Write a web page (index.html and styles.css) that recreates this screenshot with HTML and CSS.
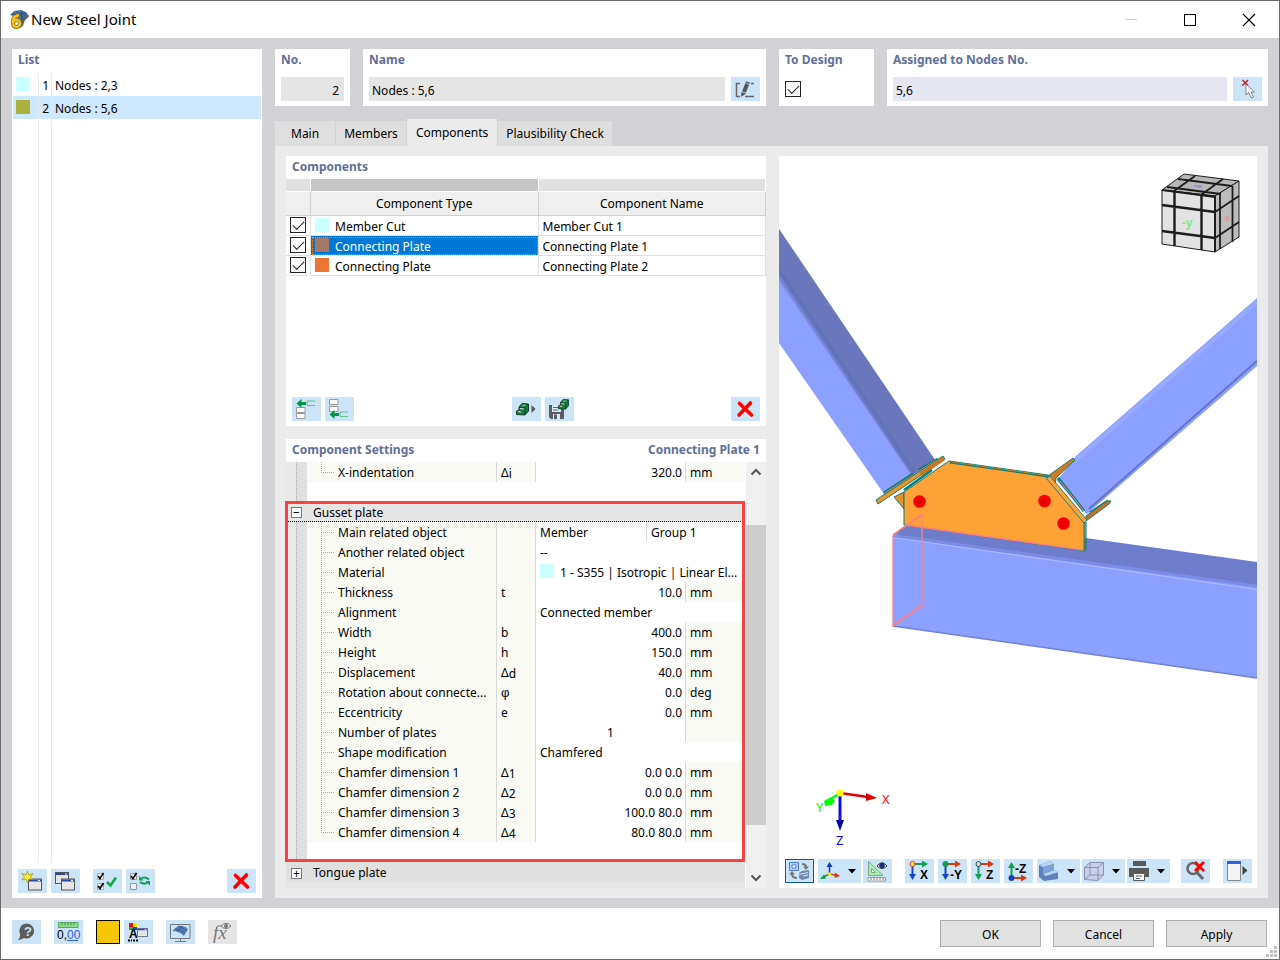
FILE: index.html
```html
<!DOCTYPE html>
<html lang="en">
<head>
    <meta charset="UTF-8">
    <meta name="viewport" content="width=device-width, initial-scale=1.0">
    <title>New Steel Joint</title>
    <link rel="stylesheet" href="styles.css">
</head>
<body>
    <!-- Shared icons -->
    <svg class="defs" width="0" height="0" aria-hidden="true">
        <symbol id="icon-delete" viewBox="0 0 29 24">
            <path d="M8.500 6.500L20.500 18M19.500 6L8 18" fill="none" stroke="#f00" stroke-width="3.600" stroke-linecap="round"/>
        </symbol>
        <symbol id="icon-window" viewBox="0 0 14 12">
            <rect x="0.500" y="0.500" width="13" height="11" fill="#e6e6e6" stroke="#555"/>
            <path d="M1 2h12" stroke="#2b46b0" stroke-width="2"/>
            <path d="M10 2h2" stroke="#fff"/>
        </symbol>
        <symbol id="icon-block" viewBox="0 0 13 13">
            <path d="M3 4L6 0.500L12.500 1V8L9 12L0.500 11.500V8L3 7Z" fill="#1c7a3f" stroke="#163b25"/>
            <path d="M3 4L9 4.500L12 1M9 4.500V11" fill="none" stroke="#163b25"/>
            <path d="M6.500 1.500L11 2L9 3.700L5 3.300Z" fill="#3cc274"/>
            <path d="M2 8.500L5 9M4 5.500L8 6" stroke="#d5eedd"/>
        </symbol>
    </svg>

    <div class="window">
        <header class="titlebar">
            <svg class="app-icon" viewBox="0 0 21 21" width="21" height="21">
                <path d="M1 6L5 2L12 1L17 3L20 7L16 11L14 17L11 19L8 7Z" fill="#4a74ac"/>
                <path d="M2 6L17 4M7 2L16 10M13 2L12 16" stroke="#2d4c78"/>
                <path d="M16 5L20 7L15 12L12 18L12 11Z" fill="#5a5b60"/>
                <path d="M10 6Q4 7 3.500 13" fill="none" stroke="#8a6d18" stroke-width="4"/>
                <circle cx="7.500" cy="14.500" r="3.500" fill="none" stroke="#8a6d18" stroke-width="4"/>
                <path d="M10 6Q4 7 3.500 13" fill="none" stroke="#f2c41c" stroke-width="2.500"/>
                <circle cx="7.500" cy="14.500" r="3.500" fill="none" stroke="#f2c41c" stroke-width="2.500"/>
            </svg>
            <h1>New Steel Joint</h1>
            <div class="window-controls">
                <button aria-label="Minimize" disabled><svg viewBox="0 0 14 14" width="14" height="14"><path d="M1 6.500h12" stroke="#ccc"/></svg></button>
                <button aria-label="Maximize"><svg viewBox="0 0 14 14" width="14" height="14"><rect x="1.500" y="1.500" width="11" height="11" fill="none" stroke="#000"/></svg></button>
                <button aria-label="Close"><svg viewBox="0 0 14 14" width="14" height="14"><path d="M1 1L13 13M13 1L1 13" stroke="#000" stroke-width="1.200"/></svg></button>
            </div>
        </header>

        <main class="workspace">
            <!-- Joint list -->
            <section class="panel list-panel">
                <h2>List</h2>
                <ul class="joint-list">
                    <li><span class="swatch cyan"></span><span class="joint-no">1</span><span class="joint-name">Nodes : 2,3</span></li>
                    <li class="selected"><span class="swatch olive"></span><span class="joint-no">2</span><span class="joint-name">Nodes : 5,6</span></li>
                    <li class="filler"><span></span><span class="joint-no"></span><span class="joint-name"></span></li>
                </ul>
                <div class="toolbar list-toolbar">
                    <button class="tool" aria-label="New">
                        <svg viewBox="0 0 29 24"><use href="#icon-window" x="10" y="9" width="14" height="13"/><path d="M9.500 2L11 6L15 4.500L12.500 8L15 10.500L11 10L9.500 13.500L8 10L4 11L6.500 8L4 4.500L8 6Z" fill="#ffee2e" stroke="#9a8d12" stroke-width="0.700"/></svg>
                    </button>
                    <button class="tool" aria-label="Copy">
                        <svg viewBox="0 0 29 24"><use href="#icon-window" x="4" y="3" width="14" height="12"/><use href="#icon-window" x="10" y="9" width="14" height="13"/></svg>
                    </button>
                    <button class="tool space-left" aria-label="Check all">
                        <svg viewBox="0 0 29 24"><path d="M4.500 4.500h6v6h-6zM4.500 14.500h6v6h-6z" fill="#fff" stroke="#aaa"/><path d="M5 7L7 9.500L10.500 4M5 17L7 19.500L10.500 14" fill="none" stroke="#000" stroke-width="1.700"/><path d="M14 13L17.500 16.500L23 8.500" fill="none" stroke="#12a84a" stroke-width="2.600"/></svg>
                    </button>
                    <button class="tool" aria-label="Invert checks">
                        <svg viewBox="0 0 29 24"><path d="M4.500 4.500h6v6h-6zM4.500 14.500h6v6h-6z" fill="#e8f1f8" stroke="#999"/><path d="M5 7L7 9.500L10.500 4" fill="none" stroke="#000" stroke-width="1.700"/><path d="M15 9.500Q19 7 23 10.500M22 13.500Q18 16 14 13" fill="none" stroke="#12a05a" stroke-width="2"/><path d="M13 7V11.500H17.500ZM24 16.500V12H19.500Z" fill="#12a05a"/></svg>
                    </button>
                    <button class="tool push-right" aria-label="Delete"><svg viewBox="0 0 29 24"><use href="#icon-delete"/></svg></button>
                </div>
            </section>

            <div class="details">
                <!-- General data -->
                <div class="general">
                    <section class="panel field-panel">
                        <h2><label for="jointNo">No.</label></h2>
                        <div class="field-row"><input type="text" id="jointNo" class="align-right" value="2" readonly></div>
                    </section>
                    <section class="panel field-panel">
                        <h2><label for="jointName">Name</label></h2>
                        <div class="field-row">
                            <input type="text" id="jointName" value="Nodes : 5,6" readonly>
                            <button class="tool" aria-label="Edit name">
                                <svg viewBox="0 0 29 24"><path d="M9 6.500H5.500V19.500H9M20 6.500h3M14 19.500h9" fill="none" stroke="#666" stroke-width="1.500"/><path d="M17 5L13 15" stroke="#555" stroke-width="4"/><path d="M10.500 15L15 16.500L10 20Z" fill="#555"/><path d="M15 6L19 8" stroke="#cce4f7" stroke-width="0.800"/></svg>
                            </button>
                        </div>
                    </section>
                    <section class="panel field-panel">
                        <h2><label for="toDesign">To Design</label></h2>
                        <div class="field-row"><input type="checkbox" id="toDesign" checked></div>
                    </section>
                    <section class="panel field-panel">
                        <h2><label for="nodes">Assigned to Nodes No.</label></h2>
                        <div class="field-row">
                            <input type="text" id="nodes" class="editable" value="5,6">
                            <button class="tool" aria-label="Select nodes">
                                <svg viewBox="0 0 29 24"><path d="M9.500 3L15 8.500M15 3L9.500 8.500" stroke="#e01020" stroke-width="1.500"/><path d="M13 7V18L15.500 15.500L18.500 21L20.500 20L18 15H21.500Z" fill="#fff" stroke="#666" stroke-width="0.800"/></svg>
                            </button>
                        </div>
                    </section>
                </div>

                <nav class="tabs">
                    <button class="tab tab-main">Main</button>
                    <button class="tab">Members</button>
                    <button class="tab active">Components</button>
                    <button class="tab">Plausibility Check</button>
                </nav>

                <div class="tab-page">
                    <div class="editor">
                        <section class="panel components-panel">
                            <h2>Components</h2>
                            <table class="components">
                                <colgroup><col class="col-check"><col><col></colgroup>
                                <thead>
                                    <tr class="strip"><td></td><td class="current"></td><td></td></tr>
                                    <tr><th></th><th>Component Type</th><th>Component Name</th></tr>
                                </thead>
                                <tbody>
                                    <tr><td><input type="checkbox" aria-label="Member Cut 1" checked></td><td><div class="type"><span class="swatch cyan"></span>Member Cut</div></td><td>Member Cut 1</td></tr>
                                    <tr><td><input type="checkbox" aria-label="Connecting Plate 1" checked></td><td class="selected"><div class="type"><span class="swatch brown"></span>Connecting Plate</div></td><td>Connecting Plate 1</td></tr>
                                    <tr><td><input type="checkbox" aria-label="Connecting Plate 2" checked></td><td><div class="type"><span class="swatch orange"></span>Connecting Plate</div></td><td>Connecting Plate 2</td></tr>
                                </tbody>
                            </table>
                            <div class="toolbar components-toolbar">
                                <button class="tool" aria-label="Insert above">
                                    <svg viewBox="0 0 29 24"><path d="M4.500 10.500h8.500v5h-8.500zM4.500 16.500h8.500v5h-8.500z" fill="#fff" stroke="#999"/><path d="M4.500 6.500L9.500 2V5H14V8H9.500V11Z" fill="#00964a"/><path d="M23 4H15V8.500H23" fill="none" stroke="#5fbf93"/></svg>
                                </button>
                                <button class="tool" aria-label="Insert below">
                                    <svg viewBox="0 0 29 24"><path d="M4.500 2.500h8.500v5h-8.500zM4.500 9.500h8.500v5h-8.500z" fill="#fff" stroke="#999"/><path d="M4.500 17.500L9.500 13V16H14V19H9.500V22Z" fill="#00964a"/><path d="M23 15H15V19.500H23" fill="none" stroke="#5fbf93"/></svg>
                                </button>
                                <span class="library-tools">
                                    <button class="tool" aria-label="Component library">
                                        <svg viewBox="0 0 29 24"><use href="#icon-block" x="4" y="6" width="13" height="13"/><path d="M19.500 8V16L23.500 12Z" fill="#555"/></svg>
                                    </button>
                                    <button class="tool" aria-label="Save component">
                                        <svg viewBox="0 0 29 24"><path d="M4 8H19V22H6L4 20Z" fill="#5b5b60"/><path d="M7 8h9v7H7z" fill="#d7e8f5"/><path d="M8 10.500h7M8 13h5" stroke="#666"/><path d="M8 17h7v5H8z" fill="#d7e8f5"/><path d="M9 17.500h3v4.500H9z" fill="#5b5b60"/><use href="#icon-block" x="13" y="2" width="11" height="11"/></svg>
                                    </button>
                                </span>
                                <button class="tool push-right" aria-label="Delete component"><svg viewBox="0 0 29 24"><use href="#icon-delete"/></svg></button>
                            </div>
                        </section>

                        <section class="panel settings-panel">
                            <h2>Component Settings<span>Connecting Plate 1</span></h2>
                            <div class="settings-body">
                                <div class="tree">
                                    <table class="props">
                                        <colgroup><col class="c-gutter"><col class="c-label"><col class="c-symbol"><col class="c-value"><col class="c-extra"><col class="c-unit"></colgroup>
                                        <tbody>
                                            <tr class="last"><td></td><td>X-indentation</td><td>Δ<sub>i</sub></td><td class="number" colspan="2">320.0</td><td>mm</td></tr>
                                            <tr class="blank"><td></td><td colspan="5"></td></tr>
                                        </tbody>
                                    </table>
                                    <div class="group highlighted">
                                        <div class="group-title current"><button class="expander" aria-label="Collapse">−</button>Gusset plate</div>
                                        <table class="props">
                                            <colgroup><col class="c-gutter"><col class="c-label"><col class="c-symbol"><col class="c-value"><col class="c-extra"><col class="c-unit"></colgroup>
                                            <tbody>
                                                <tr><td></td><td>Main related object</td><td></td><td>Member</td><td class="choice" colspan="2">Group 1</td></tr>
                                                <tr><td></td><td>Another related object</td><td></td><td colspan="3">--</td></tr>
                                                <tr><td></td><td>Material</td><td></td><td colspan="3"><div class="material"><span class="swatch cyan"></span>1 - S355 | Isotropic | Linear El...</div></td></tr>
                                                <tr><td></td><td>Thickness</td><td>t</td><td class="number" colspan="2">10.0</td><td>mm</td></tr>
                                                <tr><td></td><td>Alignment</td><td></td><td colspan="3">Connected member</td></tr>
                                                <tr><td></td><td>Width</td><td>b</td><td class="number" colspan="2">400.0</td><td>mm</td></tr>
                                                <tr><td></td><td>Height</td><td>h</td><td class="number" colspan="2">150.0</td><td>mm</td></tr>
                                                <tr><td></td><td>Displacement</td><td>Δ<sub>d</sub></td><td class="number" colspan="2">40.0</td><td>mm</td></tr>
                                                <tr><td></td><td>Rotation about connecte...</td><td class="angle">φ</td><td class="number" colspan="2">0.0</td><td>deg</td></tr>
                                                <tr><td></td><td>Eccentricity</td><td>e</td><td class="number" colspan="2">0.0</td><td>mm</td></tr>
                                                <tr><td></td><td>Number of plates</td><td></td><td class="count" colspan="2">1</td><td class="unit"></td></tr>
                                                <tr><td></td><td>Shape modification</td><td></td><td colspan="3">Chamfered</td></tr>
                                                <tr><td></td><td>Chamfer dimension 1</td><td>Δ<sub>1</sub></td><td class="number" colspan="2">0.0 0.0</td><td>mm</td></tr>
                                                <tr><td></td><td>Chamfer dimension 2</td><td>Δ<sub>2</sub></td><td class="number" colspan="2">0.0 0.0</td><td>mm</td></tr>
                                                <tr><td></td><td>Chamfer dimension 3</td><td>Δ<sub>3</sub></td><td class="number" colspan="2">100.0 80.0</td><td>mm</td></tr>
                                                <tr class="last"><td></td><td>Chamfer dimension 4</td><td>Δ<sub>4</sub></td><td class="number" colspan="2">80.0 80.0</td><td>mm</td></tr>
                                                <tr class="blank"><td></td><td colspan="5"></td></tr>
                                            </tbody>
                                        </table>
                                    </div>
                                    <div class="group-title"><button class="expander" aria-label="Expand">+</button>Tongue plate</div>
                                    <div class="group-title cut"></div>
                                </div>
                                <div class="scrollbar">
                                    <button aria-label="Scroll up"><svg viewBox="0 0 12 8" width="12" height="8"><path d="M1.500 6.500L6 2L10.500 6.500" fill="none" stroke="#555" stroke-width="2"/></svg></button>
                                    <div class="track"><div class="thumb"></div></div>
                                    <button aria-label="Scroll down"><svg viewBox="0 0 12 8" width="12" height="8"><path d="M1.500 1.500L6 6L10.500 1.500" fill="none" stroke="#555" stroke-width="2"/></svg></button>
                                </div>
                            </div>
                        </section>
                    </div>

                    <!-- 3D view -->
                    <section class="panel view-panel">
                        <svg class="scene" viewBox="779 156 478 698" preserveAspectRatio="xMidYMid meet" role="img" aria-label="Joint model">
                            <defs>
                                <linearGradient id="shadeLeft" gradientUnits="userSpaceOnUse" x1="849" y1="370" x2="840" y2="376">
                                    <stop offset="0" stop-color="#6a77bd"/><stop offset="0.300" stop-color="#6070b4"/><stop offset="1" stop-color="#8ca0ff"/>
                                </linearGradient>
                            </defs>
                            <!-- left diagonal -->
                            <path d="M779 229L935 460L884 494L779 343Z" fill="#8ca0ff"/>
                            <path d="M779 266L919 471L912 476L779 281Z" fill="url(#shadeLeft)"/>
                            <path d="M779 229L937 463L919 472L779 268Z" fill="#6a77bd"/>
                            <!-- right diagonal -->
                            <path d="M1257 298L1076 456L1057 481L1087 514L1257 366Z" fill="#8ca0ff"/>
                            <path d="M1257 302L1075 461" stroke="#96aaff" stroke-width="4"/>
                            <path d="M1257 361L1089 509" stroke="#6474c4" stroke-width="2"/>
                            <!-- chord -->
                            <path d="M893 534L922 515L1257 562V588L893 538Z" fill="#6d7dcb"/>
                            <path d="M893 537L1257 587V678L893 626Z" fill="#8ca0ff"/>
                            <path d="M893 535.500L1257 586" stroke="#7a8ce6" stroke-width="3"/>
                            <path d="M893 537.500L1257 589.500" stroke="#aabfff"/>
                            <path d="M893 626L1257 678" stroke="#6f80d2" stroke-width="1.500"/>
                            <!-- end plates -->
                            <path d="M894 497L904 492V509Z" fill="#e98e26" stroke="#0a7f78"/>
                            <path d="M884 493L913 474M919 470L938 459M1058 478L1084 511M1090 513L1108 501" stroke="#0a7f78" stroke-width="3"/>
                            <path d="M885 493L913 475M919 471L936 460M1060 481L1084 511M1090 513L1107 502" stroke="#ff8080"/>
                            <path d="M876 500L943 456L945 459L878 504Z" fill="#f09428" stroke="#0a7f78"/>
                            <path d="M919 473L943 457L945 460L922 476Z" fill="#ca7424"/>
                            <path d="M904 490L932 470" stroke="#0a7f78" stroke-width="2.500"/>
                            <path d="M1048 476L1073 458L1075 460L1056 478L1055 484Z" fill="#d27a22" stroke="#0a7f78"/>
                            <path d="M1086 521L1109 504L1111 501L1107 501L1086 516Z" fill="#c97021" stroke="#0a7f78"/>
                            <!-- gusset plate -->
                            <path d="M904 492L949 461L1048 475L1085 521V551L904 525Z" fill="#ffa235" stroke="#0a7f78"/>
                            <path d="M950 462.500L1048 476.500" stroke="#0a7f78" stroke-width="1.800"/>
                            <path d="M951 462L1047 475.500" stroke="#c78229" stroke-width="0.800"/>
                            <path d="M1046 478L1050 476L1087 520L1084 523Z" fill="#ffa235" stroke="#0a7f78" stroke-width="0.900"/>
                            <path d="M1084 522V550M1086 522V549" stroke="#0a7f78"/>
                            <path d="M905 525L1083 550" stroke="#ff8080" stroke-width="1.600"/>
                            <path d="M893 626V536L900 530L922 515V606Z" fill="none" stroke="#ff8080" stroke-width="1.300"/>
                            <path d="M894 624L921 605M894 534L921 514" stroke="#ff8080"/>
                            <g fill="#f60000"><circle cx="919.500" cy="501.500" r="6.300"/><circle cx="1044.500" cy="501" r="6.300"/><circle cx="1063.500" cy="523.500" r="6.300"/></g>
                            <g fill="none" stroke="#c80000"><circle cx="919" cy="502" r="2"/><circle cx="1044" cy="502" r="2"/><circle cx="1063" cy="524" r="2"/></g>
                            <!-- navigation cube -->
                            <g stroke="#1c1c1c" stroke-linejoin="round">
                                <path d="M1162 190L1184 174L1239 181L1215 196Z" fill="#b8b8b8"/>
                                <path d="M1215 196L1239 181V237L1215 252Z" fill="#bcbcbc"/>
                                <path d="M1162 190L1215 196V252L1162 244Z" fill="#e2e2e2"/>
                                <path d="M1174.500 192V246M1201.500 195V250M1162 205L1215 212M1162 231L1215 238" stroke-width="2.400"/>
                                <path d="M1220 193V249M1232.500 186V242M1215 212L1239 196M1215 238L1239 222" stroke-width="1.800"/>
                                <path d="M1167 187L1221 194M1178 179L1232 186M1174 191L1195 176M1201 195L1223 179M1162 190L1215 197" stroke-width="1.800"/>
                                <path d="M1215 196V252" stroke-width="2"/>
                            </g>
                            <g class="cube-label">
                                <text x="1182" y="227" fill="#82e887">-y</text>
                                <text x="1223" y="221" fill="#d99a9a" class="small">-x</text>
                                <path d="M1194 186h8M1197 187h5" stroke="#8d90c9" stroke-width="1.500"/>
                            </g>
                            <!-- axes -->
                            <path d="M840 793L868 797" stroke="#e00000" stroke-width="2.500"/>
                            <path d="M866 793L877 798L866 801Z" fill="#e00000"/>
                            <path d="M840 793L831 799" stroke="#0f0" stroke-width="2.500"/>
                            <path d="M831 797L824 801L825 806L832 805L835 801Z" fill="#0f0"/>
                            <path d="M840 794V822" stroke="#1010d8" stroke-width="3"/>
                            <path d="M836 820H844L840 831Z" fill="#0808a8"/>
                            <circle cx="840" cy="793" r="3.500" fill="#ff0"/>
                            <g class="axis-label">
                                <text x="882" y="804" fill="#f00">X</text>
                                <text x="816" y="812" fill="#0f0">Y</text>
                                <text x="836" y="845" fill="#00f">Z</text>
                            </g>
                        </svg>

                        <div class="toolbar view-toolbar">
                            <button class="tool pressed" aria-label="Switch view">
                                <svg viewBox="0 0 29 24"><path d="M4.500 3.500h9v8h-9z" fill="#b9d0fa" stroke="#4c78d8"/><path d="M7 6h4v3H7z" fill="#fff" stroke="#4c78d8"/><path d="M14 14L17 12L24 11V19L17 21L14 19Z" fill="#6f88ae"/><path d="M14 15.500L23 13.500M18 17L23 16" stroke="#dbe7f5"/><path d="M17 5Q21 5 21 8M12 19Q7 19 7 15" fill="none" stroke="#777" stroke-width="2"/><path d="M18 7.500H24L21 11ZM4 15.500H10L7 12Z" fill="#777"/></svg>
                            </button>
                            <button class="tool drop" aria-label="Axes">
                                <svg viewBox="0 0 43 24"><path d="M11.500 15V6" stroke="#1238c8" stroke-width="1.500"/><path d="M8.500 8L11.500 3L14.500 8Z" fill="#1238c8"/><path d="M11.500 15L5 18" stroke="#0a9a45" stroke-width="1.500"/><path d="M2 20L8 19.500L6 15.500Z" fill="#0a9a45"/><path d="M11.500 15L19 16.500" stroke="#d83a10" stroke-width="1.500"/><path d="M22 17L17 13.500L16.500 19Z" fill="#d83a10"/><circle cx="11.500" cy="15" r="1.800" fill="#ffe000"/><path d="M30 10H38L34 14.500Z" fill="#000"/></svg>
                            </button>
                            <button class="tool" aria-label="Measure">
                                <svg viewBox="0 0 29 24"><path d="M5.500 2.500V16.500H20Z" fill="#a9efb0" stroke="#7fa98a"/><path d="M8.500 9.500V13.500H12.500Z" fill="#fff" stroke="#7fa98a"/><path d="M5 18.500H22.500V22H5Z" fill="#fff" stroke="#999"/><path d="M8 19V21M11 19V21M14 19V21M17 19V21M20 19V21" stroke="#777"/><path d="M14 7Q19 0.500 24 7Q19 12 14 7Z" fill="#fff" stroke="#334"/><circle cx="19" cy="6.500" r="2.800" fill="#1d2f7a"/></svg>
                            </button>
                            <button class="tool space-left" aria-label="View in X">
                                <svg viewBox="0 0 29 24"><path d="M7.500 5V17" stroke="#1543c8" stroke-width="2"/><path d="M4 15H11L7.500 21Z" fill="#1543c8"/><path d="M8 5H18" stroke="#12a050" stroke-width="2"/><path d="M17 1.500V8.500L23 5Z" fill="#12a050"/><circle cx="7.500" cy="5" r="2.500" fill="#ffe94a" stroke="#e0401c"/><text x="15" y="20">X</text></svg>
                            </button>
                            <button class="tool" aria-label="View in -Y">
                                <svg viewBox="0 0 29 24"><path d="M7.500 5V17" stroke="#1543c8" stroke-width="2"/><path d="M4 15H11L7.500 21Z" fill="#1543c8"/><path d="M8 5H18" stroke="#d83a10" stroke-width="2"/><path d="M17 1.500V8.500L23 5Z" fill="#d83a10"/><circle cx="7.500" cy="5" r="3" fill="#12a050"/><text x="12" y="20">-Y</text></svg>
                            </button>
                            <button class="tool" aria-label="View in Z">
                                <svg viewBox="0 0 29 24"><path d="M7.500 5V17" stroke="#12a050" stroke-width="2"/><path d="M4 15H11L7.500 21Z" fill="#12a050"/><path d="M8 5H18" stroke="#d83a10" stroke-width="2"/><path d="M17 1.500V8.500L23 5Z" fill="#d83a10"/><circle cx="7.500" cy="5" r="2.500" fill="#ffe94a" stroke="#1543c8"/><text x="15" y="20">Z</text></svg>
                            </button>
                            <button class="tool" aria-label="View in -Z">
                                <svg viewBox="0 0 29 24"><path d="M7.500 7V19" stroke="#12a050" stroke-width="2"/><path d="M4 9H11L7.500 3Z" fill="#12a050"/><path d="M8 19H18" stroke="#d83a10" stroke-width="2"/><path d="M17 15.500V22.500L23 19Z" fill="#d83a10"/><circle cx="7.500" cy="19" r="3" fill="#1543c8"/><text x="11" y="14">-Z</text></svg>
                            </button>
                            <button class="tool drop" aria-label="Display style">
                                <svg viewBox="0 0 43 24"><path d="M2 6L14 2L17 5V11L21 13V20L7 22L2 18Z" fill="#5f80ba"/><path d="M2 6L14 2L17 5L6 8ZM6 15L17 11L22 13L9 17Z" fill="#b5d3f5"/><path d="M6 8L17 5V11L6 15Z" fill="#7ea2d8"/><path d="M30 10H38L34 14.500Z" fill="#000"/></svg>
                            </button>
                            <button class="tool drop" aria-label="Box view">
                                <svg viewBox="0 0 43 24"><path d="M2.500 8.500L8 3.500H21.500V16L16 21.500L2.500 20.500Z" fill="#c8cfe8" stroke="#8b8fae"/><path d="M2.500 8.500H16L21.500 3.500M16 8.500V21M8 4V16L3 20M8 16H21" fill="none" stroke="#8b8fae"/><path d="M30 10H38L34 14.500Z" fill="#000"/></svg>
                            </button>
                            <button class="tool drop" aria-label="Print">
                                <svg viewBox="0 0 43 24"><path d="M6 2h13v5H6zM2 9H22V18H18V14H6V18H2Z" fill="#595959"/><path d="M6.500 14.500h11v7h-11z" fill="#fff" stroke="#595959"/><path d="M9 17h6M9 19.500h4" stroke="#595959"/><path d="M30 10H38L34 14.500Z" fill="#000"/></svg>
                            </button>
                            <button class="tool space-left" aria-label="Reset zoom">
                                <svg viewBox="0 0 29 24"><circle cx="12" cy="9.500" r="5.500" fill="none" stroke="#666" stroke-width="2.500"/><path d="M15.500 13L22 20" stroke="#666" stroke-width="3"/><path d="M14 3L23 12M23 3L14 12" stroke="#f00" stroke-width="2.800"/></svg>
                            </button>
                            <button class="tool space-left" aria-label="Panel">
                                <svg viewBox="0 0 29 24"><path d="M4.500 2.500h13v19h-13z" fill="#f4f4f6" stroke="#888"/><path d="M4 3.500h14" stroke="#2f62dc" stroke-width="3"/><path d="M19.500 7V16L24.500 11.500Z" fill="#444"/></svg>
                            </button>
                        </div>
                    </section>
                </div>
            </div>
        </main>

        <footer class="footer">
            <div class="toolbar">
                <button class="tool" aria-label="Help">
                    <svg viewBox="0 0 29 24"><path d="M15 3.500A7.500 7.500 0 1 1 12 18Q9 20 5.500 20Q8.500 18 8 14A7.500 7.500 0 0 1 15 3.500Z" fill="#5c5c5c"/><text class="help-mark" x="12" y="16">?</text></svg>
                </button>
                <button class="tool space-left" aria-label="Units">
                    <svg viewBox="0 0 29 24"><path d="M4.500 2.500H24V7.500H4.500Z" fill="#8bd98a" stroke="#5aa85a"/><path d="M8 3V5M11 3V5M14 3V5M17 3V5M20 3V5" stroke="#4a8a4a"/><text class="digits" x="3" y="19">0,<tspan fill="#2f62dc">00</tspan></text><path d="M13 20.500H24" stroke="#2f62dc"/></svg>
                </button>
                <button class="color-tool space-left" aria-label="Color"></button>
                <button class="tool" aria-label="Display properties">
                    <svg viewBox="0 0 29 24"><path d="M5 3h4v4H5z" fill="#e81010"/><path d="M9 3h4v4H9z" fill="#ffe600"/><path d="M5 7h4v3H5z" fill="#20b020"/><path d="M9 7h4v3H9z" fill="#2040e0"/><text x="5" y="18">A</text><path d="M4 20.500h4M9 20.500h5" stroke="#000" stroke-width="2" stroke-dasharray="2 1"/><use href="#icon-window" x="13" y="8" width="11" height="9"/></svg>
                </button>
                <button class="tool space-left" aria-label="Screen">
                    <svg viewBox="0 0 29 24"><path d="M4.500 4.500H24V18.500H4.500ZM9 21.500H20M14.500 18.500V21.500" fill="none" stroke="#777"/><path d="M6 11L12 6Q18 5 22 9L18 16Q13 11 6 11Z" fill="#5683b8"/><path d="M9 9Q15 9 19 13M12 6Q17 8 21 11M16 6L11 12" fill="none" stroke="#2c4f80" stroke-width="0.800"/></svg>
                </button>
                <button class="tool disabled space-left" aria-label="Formula" disabled>
                    <svg viewBox="0 0 29 24"><text class="formula" x="5" y="19">fx</text><path d="M13 6Q18 0.500 23 6Q18 11 13 6Z" fill="none" stroke="#777"/><circle cx="18" cy="6" r="2" fill="#777"/></svg>
                </button>
            </div>
            <div class="dialog-buttons">
                <button>OK</button>
                <button>Cancel</button>
                <button>Apply</button>
            </div>
            <svg class="grip" viewBox="0 0 11 11" width="11" height="11"><path d="M8 0h3v3H8zM4 4h3v3H4zM8 4h3v3H8zM0 8h3v3H0zM4 8h3v3H4zM8 8h3v3H8z" fill="#bfbfbf"/></svg>
        </footer>
    </div>
</body>
</html>
```
FILE: styles.css
```css
/* General Styling */
* {
    margin: 0;
    padding: 0;
    box-sizing: border-box;
}

body, button, input {
    font-family: "Noto Sans", sans-serif;
    font-size: 12px;
    line-height: 20px;
    color: #000;
}

button {
    border: none;
    background: none;
}

.defs {
    position: absolute;
}

/* Window */
.window {
    display: flex;
    flex-direction: column;
    min-height: 100vh;
    border: 1px solid #6b6b6b;
    background: #fff;
}

.titlebar {
    display: flex;
    align-items: center;
    height: 37px;
    padding: 0 1px 0 8px;
}

.titlebar h1 {
    font-size: 15px;
    font-weight: normal;
    line-height: 18px;
    padding: 0 0 2px 1px;
}

.window-controls {
    display: flex;
    margin-left: auto;
}

.window-controls button {
    width: 59px;
    height: 35px;
}

.window-controls svg {
    vertical-align: middle;
}

.workspace {
    flex: 1;
    display: flex;
    gap: 13px;
    padding: 11px 11px 10px;
    background: #d2d1d6;
}

.panel {
    background: #fff;
}

.panel h2 {
    display: flex;
    justify-content: space-between;
    padding: 1px 6px 2px;
    font-size: 12px;
    line-height: 20px;
    color: #5f6f9a;
}

/* Tool buttons */
.toolbar {
    display: flex;
    gap: 4px;
}

.tool {
    flex: none;
    width: 29px;
    height: 24px;
    background: #cce4f7;
}

.tool svg {
    display: block;
    width: 100%;
    height: 100%;
}

.tool text {
    font: bold 12px "Liberation Sans", sans-serif;
}

.tool .help-mark {
    font-size: 13px;
    fill: #cce4f7;
}

.tool .digits {
    font-size: 12px;
    font-weight: normal;
}

.tool .formula {
    font: italic 19px "Liberation Serif", serif;
    fill: #777;
}

.tool.drop {
    width: 43px;
    margin-right: -2px;
}

.tool.pressed svg {
    outline: 1px solid #0a5a9e;
    outline-offset: -1px;
}

.tool.disabled {
    background: #e5e5e5;
}

.space-left {
    margin-left: 9px;
}

.push-right {
    margin-left: auto;
}

.swatch {
    flex: none;
    width: 14px;
    height: 14px;
}

.cyan { background: #ccffff; }
.olive { background: #abb03f; }
.brown { background: #a57766; }
.orange { background: #e97733; }

/* Joint list */
.list-panel {
    display: flex;
    flex-direction: column;
    flex: 0 0 250px;
}

.joint-list {
    flex: 1;
    display: flex;
    flex-direction: column;
    list-style: none;
    padding: 1px 1px 0;
}

.joint-list li {
    display: grid;
    grid-template-columns: 22px 14px 1fr;
    padding-left: 3px;
    height: 23px;
}

.joint-list .swatch {
    margin-top: 4px;
}

.joint-no {
    border-left: 1px solid #ebebeb;
    border-right: 1px solid #ebebeb;
    text-align: right;
    line-height: 25px;
    padding-right: 2px;
}

.joint-name {
    padding-left: 3px;
    line-height: 25px;
}

.joint-list .selected {
    background: #cde8ff;
}

.joint-list .filler {
    flex: 1;
}

.list-toolbar {
    padding: 6px 6px 5px;
}

/* General data */
.details {
    flex: 1;
    min-width: 0;
    display: flex;
    flex-direction: column;
}

.general {
    display: grid;
    grid-template-columns: 75px 403px 95px 1fr;
    gap: 13px;
}

.field-row {
    display: flex;
    align-items: center;
    gap: 6px;
    height: 34px;
    padding: 0 6px;
}

input[type="text"] {
    flex: 1;
    width: 100%;
    min-width: 0;
    height: 24px;
    padding: 2px 5px 0 3px;
    border: none;
    background: #e5e5e5;
}

input.align-right {
    text-align: right;
}

input.editable {
    background: #e6e6f2;
}

input[type="checkbox"] {
    appearance: none;
    display: grid;
    place-items: center;
    width: 16px;
    height: 16px;
    border: 1px solid #222;
    background: #fff;
}

input[type="checkbox"]:checked::before {
    content: "";
    width: 10px;
    height: 5px;
    margin-bottom: 3px;
    border-left: 1px solid #222;
    border-bottom: 1px solid #222;
    transform: rotate(-45deg);
}

/* Tabs */
.tabs {
    display: flex;
    align-items: flex-end;
    height: 28px;
    margin-top: 12px;
}

.tab {
    height: 25px;
    padding: 0 8px;
    background: #dedede;
    border-right: 1px solid #d2d1d6;
}

.tab-main {
    padding: 0 16px;
}

.tab.active {
    height: 27px;
    padding: 0 9px;
    background: #ebebeb;
}

.tab-page {
    flex: 1;
    display: flex;
    gap: 13px;
    padding: 10px 11px;
    background: #ebebeb;
}

.editor {
    flex: 0 0 480px;
    display: flex;
    flex-direction: column;
    gap: 13px;
}

/* Components table */
.components-panel {
    flex: 1;
    display: flex;
    flex-direction: column;
    min-height: 260px;
}

.components {
    width: 100%;
    table-layout: fixed;
    border-spacing: 0;
}

.col-check {
    width: 25px;
}

.components .strip td {
    height: 13px;
    padding: 0;
    background: #e0e0e0;
    border-right: 1px solid #fff;
    border-bottom: 1px solid #fff;
}

.components .strip .current {
    background: #c6c6c6;
}

.components th {
    height: 24px;
    font-weight: normal;
    background: #efefef;
    border-right: 1px solid #d0d0d0;
    border-bottom: 1px solid #d0d0d0;
}

.components tbody td {
    height: 20px;
    padding: 2px 0 0 4px;
    line-height: 17px;
    border-right: 1px solid #e0e0e0;
    border-bottom: 1px solid #e0e0e0;
}

.components tbody td:first-child {
    padding-top: 1px;
    vertical-align: top;
}

.type {
    display: flex;
    gap: 6px;
    line-height: 17px;
}

.components .selected {
    background: #0078d7;
    color: #fff;
    outline: 1px dotted #e98b3a;
    outline-offset: -2px;
}

.components-toolbar {
    margin-top: auto;
    padding: 0 6px 5px;
}

.library-tools {
    display: flex;
    gap: 4px;
    margin-left: auto;
}

/* Component settings */
.settings-panel {
    flex: none;
}

.settings-body {
    display: flex;
    gap: 1px;
}

.tree {
    flex: 1;
    min-width: 0;
}

.props {
    width: 100%;
    table-layout: fixed;
    border-spacing: 0;
}

.c-gutter { width: 21px; }
.c-symbol { width: 40px; }
.c-value { width: 110px; }
.c-extra { width: 39px; }
.c-unit { width: 60px; }

.props td {
    height: 20px;
    padding: 2px 0 0 4px;
    line-height: 18px;
    white-space: nowrap;
}

.props td:nth-child(1) {
    padding: 0;
    background:
        repeating-linear-gradient(#aaa 0 1px, transparent 1px 2px) 10px 0 / 1px 100% no-repeat,
        linear-gradient(to right, #e9e9e9 10px, #e0e0e0 10px);
}

.props td:nth-child(2) {
    padding-left: 31px;
    background:
        repeating-linear-gradient(#aaa 0 1px, transparent 1px 2px) 14px 0 / 1px 100% no-repeat,
        repeating-linear-gradient(to right, #aaa 0 1px, transparent 1px 2px) 16px 10px / 12px 1px no-repeat,
        #f9faf3;
}

.props .last td:nth-child(2) {
    background-size: 1px 11px, 12px 1px, auto;
}

.props td:nth-child(3) {
    background: #f9faf3;
    border-left: 1px solid #d9d9d9;
    border-right: 1px solid #d9d9d9;
}

.props td.choice {
    border-left: 1px solid #d9d9d9;
}

.props td.number {
    text-align: right;
    padding-right: 3px;
}

.props td.count {
    text-align: center;
    padding-left: 0;
}

.props td.number + td,
.props td.unit {
    background: #f9faf3;
    border-left: 1px solid #d9d9d9;
}

.props td.angle {
    font-family: "Liberation Sans", sans-serif;
    font-size: 13px;
}

.props .blank td:nth-child(2) {
    background: #fff;
}

.props sub {
    font-size: 12px;
    line-height: 12px;
    vertical-align: -1px;
}

.material {
    display: flex;
    gap: 6px;
}

.group {
    position: relative;
}

/* Red frame drawn over the highlighted group */
.highlighted::after {
    content: "";
    position: absolute;
    inset: -1px 0 0 -1px;
    border: 3px solid #fa4141;
    pointer-events: none;
}

.group-title {
    display: flex;
    align-items: center;
    gap: 11px;
    height: 20px;
    padding: 2px 0 0 5px;
    background: #e0e0e0;
}

.group-title.current {
    background: #e6e6e6;
    border-bottom: 1px dotted #000;
}

.group-title.cut {
    height: 6px;
    background: #e6e6e6;
}

.expander {
    width: 11px;
    height: 11px;
    border: 1px solid #777;
    background: #fff;
    line-height: 9px;
}

.scrollbar {
    flex: 0 0 20px;
    display: flex;
    flex-direction: column;
    background: #f0f0f0;
}

.scrollbar button {
    height: 20px;
}

.track {
    flex: 1;
    display: grid;
    grid-template-rows: 43fr 298fr 43fr;
}

.thumb {
    grid-row: 2;
    background: #cdcdcd;
}

/* 3D view */
.view-panel {
    flex: 1;
    min-width: 0;
    display: flex;
    flex-direction: column;
    overflow: hidden;
}

.scene {
    display: block;
    width: 100%;
    flex: 1;
    min-height: 0;
}

.cube-label text {
    font: bold 12px "Noto Sans", sans-serif;
}

.cube-label .small {
    font-size: 8px;
}

.axis-label text {
    font: 13px "Noto Sans", sans-serif;
}

.view-toolbar {
    padding: 5px 6px;
}

/* Footer */
.footer {
    position: relative;
    display: flex;
    justify-content: space-between;
    padding: 12px 12px 12px 11px;
}

.color-tool {
    width: 24px;
    height: 24px;
    border: 1px solid #000;
    background: #f7c600;
}

.dialog-buttons {
    display: flex;
    gap: 12px;
}

.dialog-buttons button {
    width: 101px;
    height: 27px;
    padding-top: 2px;
    border: 1px solid #adadad;
    background: #e1e1e1;
}

.grip {
    position: absolute;
    right: 2px;
    bottom: 2px;
}
```
